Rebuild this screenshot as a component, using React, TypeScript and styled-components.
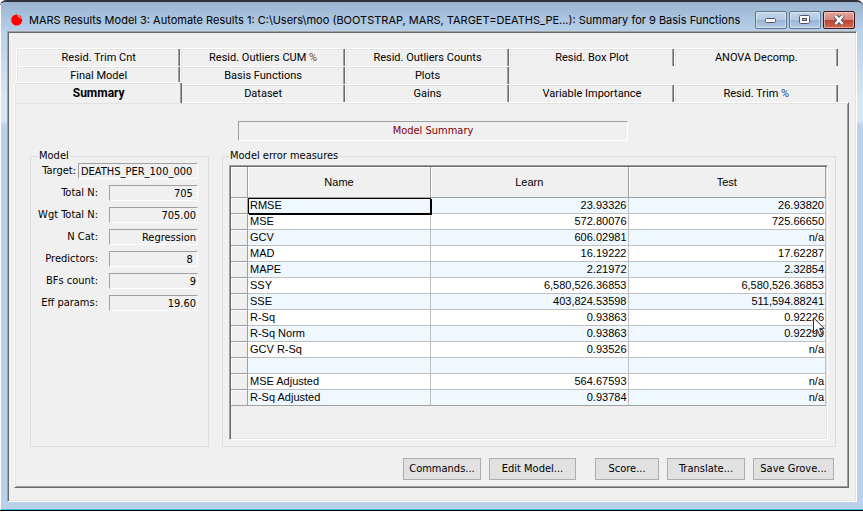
import React from "react";
import styled, { createGlobalStyle, css } from "styled-components";

const tahoma = `"DejaVu Sans Condensed", "DejaVu Sans", sans-serif`;
const face = "#f0f0f0";

const sunken = css`
  border: 1px solid;
  border-color: #a0a0a0 #ffffff #ffffff #a0a0a0;
`;

const GlobalStyle = createGlobalStyle`
  *, *::before, *::after { box-sizing: border-box; }
  body { margin: 0; background: #ffffff; color: #000000; font-family: ${tahoma}; font-size: 11px; }
`;

const Window = styled.div`
  display: flex;
  flex-direction: column;
  min-height: calc(100vh - 1px);
  padding: 0 6px 8px 7px;
  border-top: 2px solid #2f3038;
  border-bottom: 1px solid #000000;
  border-radius: 6px 6px 0 0;
  background: linear-gradient(#99b4d1 0, #b9d1ea 30px, #d9e6f4 100px, #d9e6f4 118px, #b9d1ea 124px);
  box-shadow: inset 1px 0 #ffffff, inset 0 -1px #35c0e0;
`;

const TitleBar = styled.header`
  display: flex;
  align-items: center;
  gap: 6px;
  height: 29px;
  padding: 6px 2px 0 4px;
`;

const Title = styled.h1`
  flex: 1;
  margin: 0;
  overflow: hidden;
  white-space: nowrap;
  font: 400 11px/18px Inter, sans-serif;
`;

const Captions = styled.div`
  display: flex;
  gap: 2px;
`;

const CaptionButton = styled.button<{ $close?: boolean }>`
  display: grid;
  place-items: center;
  width: 32px;
  height: 18px;
  padding: 0;
  border: 1px solid ${(p) => (p.$close ? "#43141a" : "#5f7388")};
  border-radius: 2px;
  background: ${(p) =>
    p.$close
      ? "linear-gradient(#e3a79c 0, #d5857a 48%, #b8412f 50%, #cf6a50 100%)"
      : "linear-gradient(#c3d6ea 0, #b4cae2 48%, #98b3d1 50%, #b4cde8 100%)"};
  box-shadow: inset 0 0 0 1px rgba(255, 255, 255, 0.45);
`;

const Client = styled.main`
  display: flex;
  flex: 1;
  flex-direction: column;
  padding: 14px 7px 13px 6px;
  border: 1px solid;
  border-color: #a0a0a0 #ffffff #ffffff #a0a0a0;
  background: ${face};
  box-shadow: inset 1px 1px #696969, inset -1px -1px #e3e3e3;
`;

const Tabs = styled.nav`
  display: grid;
  grid-template-columns: repeat(5, 1fr);
  grid-auto-rows: 18px;
  padding: 2px 11px 0 2px;
`;

const Tab = styled.button<{ $active?: boolean }>`
  padding: 0;
  border: 0 solid #ffffff;
  border-width: 1px 0 0 1px;
  border-top-left-radius: 2px;
  background: ${face};
  box-shadow: inset -1px 0 #696969, inset -2px 0 #a0a0a0, inset 1px 1px #e3e3e3;
  color: #000000;
  font: 400 11px/16px Roboto, "Liberation Sans", sans-serif;
  ${(p) =>
    p.$active &&
    css`
      z-index: 1;
      margin: -2px -2px -1px -2px;
      font-weight: 700;
      font-size: 12px;
    `}
`;

const TabSpace = styled.span`
  min-width: 0;
`;

const Percent = styled.span<{ $tone: string }>`
  color: ${(p) => p.$tone};
`;

const Panel = styled.section`
  display: flex;
  flex: 1;
  flex-direction: column;
  padding: 18px 12px 7px 15px;
  border: 1px solid;
  border-color: #ffffff #696969 #696969 #ffffff;
  box-shadow: inset 1px 1px #e3e3e3, inset -1px -1px #a0a0a0;
`;

const Banner = styled.h2`
  ${sunken}
  align-self: center;
  width: 390px;
  max-width: 100%;
  margin: 0 0 8px;
  color: #800000;
  font: 400 11px/18px ${tahoma};
  text-align: center;
`;

const Groups = styled.div`
  display: flex;
  flex: 1;
  gap: 13px;
`;

const Group = styled.fieldset<{ $grow?: boolean }>`
  display: flex;
  flex-direction: column;
  ${(p) => (p.$grow ? "flex: 1;" : "flex: 0 0 179px;")}
  min-width: 0;
  margin: 0;
  padding: ${(p) => (p.$grow ? "2px 7px 6px 6px" : "0 10px 8px 7px")};
  border: 1px solid #dcdcdc;

  legend {
    padding: 0 1px;
    font-size: 11px;
    line-height: 14px;
  }
`;

const Fields = styled.div`
  display: flex;
  flex-direction: column;
  gap: 6px;
`;

const Field = styled.label<{ $wide?: boolean }>`
  display: grid;
  grid-template-columns: ${(p) => (p.$wide ? "38px 1fr" : "60px 1fr")};
  gap: ${(p) => (p.$wide ? "2px" : "11px")};
  align-items: center;
  line-height: 14px;
  text-align: right;
  white-space: nowrap;
`;

const Value = styled.input<{ $wide?: boolean }>`
  ${sunken}
  width: 100%;
  min-width: 0;
  height: 16px;
  padding: 0 1px 0 2px;
  border-radius: 0;
  background: ${face};
  color: #000000;
  font: 400 11px/14px ${tahoma};
  text-align: ${(p) => (p.$wide ? "left" : "right")};
`;

const GridFrame = styled.div`
  flex: 1;
  padding: 1px;
  border: 1px solid;
  border-color: #a0a0a0 #ffffff #ffffff #a0a0a0;
  box-shadow: inset 1px 1px #696969, inset -1px -1px #e3e3e3;
`;

const Grid = styled.table`
  width: 100%;
  table-layout: fixed;
  border-collapse: separate;
  border-spacing: 0;
  font: 400 11px/15px "Liberation Sans", sans-serif;
`;

const HeadCell = styled.th`
  height: 31px;
  padding: 0;
  border: 0 solid #a0a0a0;
  border-width: 0 1px 1px 0;
  background: ${face};
  box-shadow: inset 1px 1px #ffffff;
  font-weight: 400;
  text-align: center;
`;

const RowHead = styled(HeadCell)`
  height: 16px;
`;

const IndexCol = styled.col`
  width: 17px;
`;

const NameCol = styled.col`
  width: 183px;
`;

const Row = styled.tr`
  background: #ffffff;

  &:nth-child(odd) {
    background: #f0f8ff;
  }

  &:last-child td {
    border-bottom-color: #a0a0a0;
  }
`;

const Cell = styled.td<{ $name?: boolean; $selected?: boolean }>`
  position: relative;
  height: 16px;
  padding: 0 1px 0 2px;
  border: 0 solid #c0c0c0;
  border-width: 0 1px 1px 0;
  text-align: ${(p) => (p.$name ? "left" : "right")};
  white-space: nowrap;
  ${(p) =>
    p.$selected &&
    css`
      z-index: 1;
      border-color: #000000;
      box-shadow: inset 1px 1px #000000, 1px 1px #000000;
    `}
`;

const Pointer = styled.svg`
  position: absolute;
  top: 1px;
  right: -1px;
  z-index: 2;
`;

const Actions = styled.div`
  display: flex;
  justify-content: flex-end;
  gap: 8px;
  margin: 11px 2px 0 0;
`;

const Action = styled.button<{ $width: number; $apart?: boolean }>`
  width: ${(p) => p.$width}px;
  height: 22px;
  margin-left: ${(p) => (p.$apart ? "11px" : "0")};
  padding: 0;
  border: 1px solid #adadad;
  background: #e1e1e1;
  color: #000000;
  font: 400 11px/14px ${tahoma};
`;

const tabs: (string | null)[] = [
  "Resid. Trim Cnt", "Resid. Outliers CUM %", "Resid. Outliers Counts", "Resid. Box Plot", "ANOVA Decomp.",
  "Final Model", "Basis Functions", "Plots", null, null,
  "Summary", "Dataset", "Gains", "Variable Importance", "Resid. Trim %",
];

const fields = [
  ["Target:", "DEATHS_PER_100_000"],
  ["Total N:", "705 "],
  ["Wgt Total N:", "705.00"],
  ["N Cat:", "Regression"],
  ["Predictors:", "8 "],
  ["BFs count:", "9"],
  ["Eff params:", "19.60"],
];

const measures = [
  ["RMSE", "23.93326", "26.93820"],
  ["MSE", "572.80076", "725.66650"],
  ["GCV", "606.02981", "n/a"],
  ["MAD", "16.19222", "17.62287"],
  ["MAPE", "2.21972", "2.32854"],
  ["SSY", "6,580,526.36853", "6,580,526.36853"],
  ["SSE", "403,824.53598", "511,594.88241"],
  ["R-Sq", "0.93863", "0.92226"],
  ["R-Sq Norm", "0.93863", "0.92299"],
  ["GCV R-Sq", "0.93526", "n/a"],
  ["", "", ""],
  ["MSE Adjusted", "564.67593", "n/a"],
  ["R-Sq Adjusted", "0.93784", "n/a"],
];

const actions = [
  { label: "Commands...", width: 78 },
  { label: "Edit Model...", width: 87 },
  { label: "Score...", width: 64, apart: true },
  { label: "Translate...", width: 78 },
  { label: "Save Grove...", width: 81 },
];

function TabLabel({ text }: { text: string }) {
  if (!text.endsWith("%")) return <>{text}</>;
  return (
    <>
      {text.slice(0, -1)}
      <Percent $tone={text.includes("CUM") ? "#8a4210" : "#1f4a94"}>%</Percent>
    </>
  );
}

export default function App() {
  return (
    <>
      <GlobalStyle />
      <Window>
        <TitleBar>
          <svg width="12" height="12" viewBox="0 0 12 12" aria-hidden="true">
            <circle cx="5.7" cy="6" r="5.5" fill="#ff0000" />
            <path d="M6.5 0.5 L11.4 5 L9 4 L7 2.4 Z" fill="#ffd9cf" />
          </svg>
          <Title>
            MARS Results Model 3: Automate Results 1: C:\Users\moo (BOOTSTRAP, MARS, TARGET=DEATHS_PE...): Summary for 9 Basis Functions
          </Title>
          <Captions>
            <CaptionButton aria-label="Minimize">
              <svg width="12" height="6" viewBox="0 0 12 6">
                <rect x="0.5" y="1.5" width="10" height="4" rx="1" fill="#fff" stroke="#535666" />
              </svg>
            </CaptionButton>
            <CaptionButton aria-label="Restore">
              <svg width="12" height="10" viewBox="0 0 12 10">
                <rect x="0.5" y="0.5" width="10" height="8" rx="1" fill="#fff" stroke="#535666" />
                <rect x="3.5" y="3.5" width="4" height="2" fill="#9db8d6" stroke="#535666" />
              </svg>
            </CaptionButton>
            <CaptionButton aria-label="Close" $close>
              <svg width="12" height="10" viewBox="0 0 12 10">
                <path d="M2.5 1 L9.5 9 M9.5 1 L2.5 9" stroke="#535666" strokeWidth="4.6" />
                <path d="M2.5 1 L9.5 9 M9.5 1 L2.5 9" stroke="#fff" strokeWidth="2.6" />
              </svg>
            </CaptionButton>
          </Captions>
        </TitleBar>
        <Client>
          <Tabs>
            {tabs.map((text, i) =>
              text ? (
                <Tab key={i} $active={text === "Summary"}>
                  <TabLabel text={text} />
                </Tab>
              ) : (
                <TabSpace key={i} />
              )
            )}
          </Tabs>
          <Panel>
            <Banner>Model Summary</Banner>
            <Groups>
              <Group>
                <legend>Model</legend>
                <Fields>
                  {fields.map(([label, value], i) => (
                    <Field key={label} $wide={i === 0}>
                      {label}
                      <Value readOnly value={value} $wide={i === 0} />
                    </Field>
                  ))}
                </Fields>
              </Group>
              <Group $grow>
                <legend>Model error measures</legend>
                <GridFrame>
                  <Grid>
                    <colgroup>
                      <IndexCol />
                      <NameCol />
                      <col />
                      <col />
                    </colgroup>
                    <thead>
                      <tr>
                        <HeadCell />
                        <HeadCell>Name</HeadCell>
                        <HeadCell>Learn</HeadCell>
                        <HeadCell>Test</HeadCell>
                      </tr>
                    </thead>
                    <tbody>
                      {measures.map(([name, learn, test], i) => (
                        <Row key={i}>
                          <RowHead />
                          <Cell $name $selected={i === 0}>{name}</Cell>
                          <Cell>{learn}</Cell>
                          <Cell>
                            {test}
                            {name === "R-Sq" && (
                              <Pointer width="13" height="26" viewBox="0 -6 13 26" aria-hidden="true">
                                <path
                                  d="M0.5 0.8 L0.5 15.5 L4 12.3 L6.6 18.2 L9 17.2 L6.5 11.4 L11.3 11.4 Z"
                                  fill="#fff"
                                  stroke="#33343f"
                                />
                              </Pointer>
                            )}
                          </Cell>
                        </Row>
                      ))}
                    </tbody>
                  </Grid>
                </GridFrame>
              </Group>
            </Groups>
            <Actions>
              {actions.map((a) => (
                <Action key={a.label} $width={a.width} $apart={a.apart}>{a.label}</Action>
              ))}
            </Actions>
          </Panel>
        </Client>
      </Window>
    </>
  );
}
